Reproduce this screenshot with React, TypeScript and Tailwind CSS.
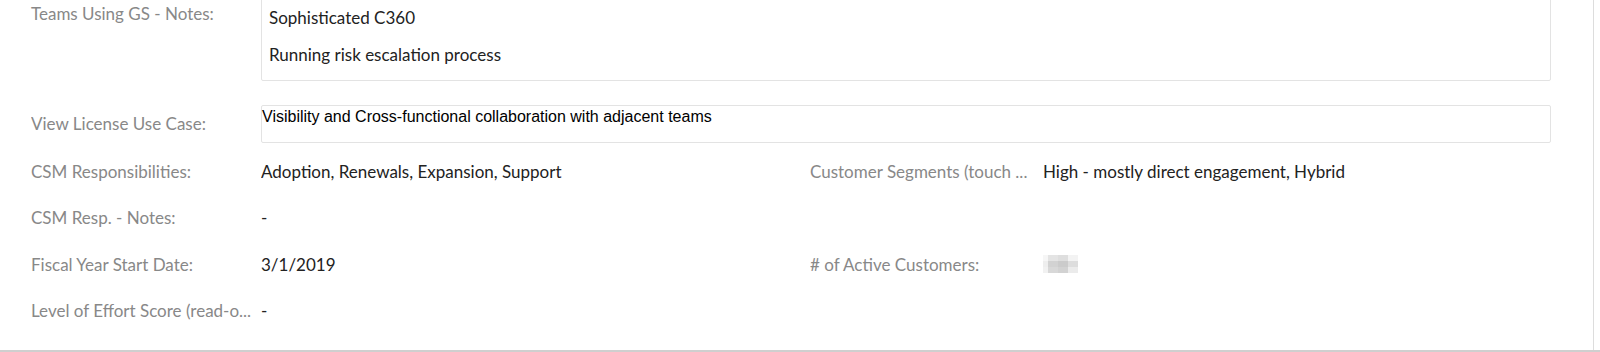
import React from "react";

const font = { fontFamily: "Lato, 'Open Sans', sans-serif" };

type Field = { label: string; value: React.ReactNode };

const Label = ({ children }: { children: React.ReactNode }) => (
  <div className="w-[230px] shrink-0 truncate pr-2 text-[17px] text-[#888888]">{children}</div>
);

const Value = ({ children }: { children: React.ReactNode }) => (
  <div className="flex-1 truncate text-[17px] text-[#222222]">{children}</div>
);

// value is masked in the source screenshot
const BlurredNumber = () => (
  <div className="-ml-[5px] grid w-[40px] grid-cols-4 grid-rows-3">
    <div className="h-[6px] bg-[#f6f6f6]" />
    <div className="h-[6px] bg-[#e4e4e4]" />
    <div className="h-[6px] bg-[#dedede]" />
    <div className="h-[6px] bg-[#f3f3f3]" />
    <div className="h-[6px] bg-[#eeeeee]" />
    <div className="h-[6px] bg-[#d2d2d2]" />
    <div className="h-[6px] bg-[#cbcbcb]" />
    <div className="h-[6px] bg-[#dddddd]" />
    <div className="h-[6px] bg-[#f1f1f1]" />
    <div className="h-[6px] bg-[#d8d8d8]" />
    <div className="h-[6px] bg-[#d2d2d2]" />
    <div className="h-[6px] bg-[#ebebeb]" />
  </div>
);

const rows: [Field, Field | null][] = [
  [
    { label: "CSM Responsibilities:", value: "Adoption, Renewals, Expansion, Support" },
    { label: "Customer Segments (touch ...", value: "High - mostly direct engagement, Hybrid" },
  ],
  [{ label: "CSM Resp. - Notes:", value: "-" }, null],
  [
    { label: "Fiscal Year Start Date:", value: "3/1/2019" },
    { label: "# of Active Customers:", value: <BlurredNumber /> },
  ],
  [{ label: "Level of Effort Score (read-o...", value: "-" }, null],
];

const App = () => {
  return (
    <div className="h-[352px] w-[1600px] overflow-hidden bg-white" style={font}>
      <div className="h-[350px] w-[1594px] overflow-hidden border-r border-[#dddddd] pl-[31px]">
        {/* notes textarea */}
        <div className="-mt-px flex">
          <div className="w-[230px] shrink-0 pt-[2px] text-[17px] text-[#888888]">Teams Using GS - Notes:</div>
          <div className="h-[82px] w-[1290px] rounded-b-[2px] border border-[#e3e3e3] pl-[7px] pt-[7px] text-[17px] leading-[22px] text-[#222222]">
            <p>Sophisticated C360</p>
            <p className="mt-[15px]">Running risk escalation process</p>
          </div>
        </div>

        <div className="mt-[24px] flex items-center">
          <Label>View License Use Case:</Label>
          <div
            className="h-[38px] w-[1290px] rounded-[2px] border border-[#e3e3e3] text-[16px] leading-[22px] text-black"
            style={{ fontFamily: "'Liberation Sans', Arial, sans-serif" }}
          >
            Visibility and Cross-functional collaboration with adjacent teams
          </div>
        </div>

        <div className="mt-[5px]">
          {rows.map(([left, right], i) => (
            <div key={i} className="flex h-[46.5px] items-center">
              <div className="flex w-[779px] items-center">
                <Label>{left.label}</Label>
                <Value>{left.value}</Value>
              </div>
              {right && (
                <div className="flex flex-1 items-center">
                  <div className="w-[233px] shrink-0 truncate pr-2 text-[17px] text-[#888888]">{right.label}</div>
                  <Value>{right.value}</Value>
                </div>
              )}
            </div>
          ))}
        </div>
      </div>
      <div className="h-[2px] w-full bg-[#cfcfcf]" />
    </div>
  );
};

export default App;
